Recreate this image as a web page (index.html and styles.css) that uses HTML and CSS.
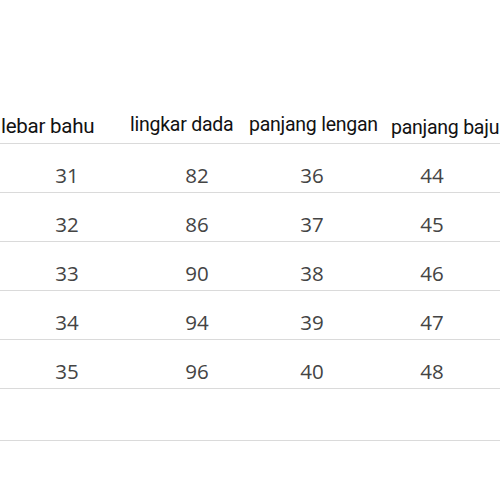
FILE: index.html
```html
<!DOCTYPE html>
<html>
<head>
<meta charset="utf-8">
<link rel="stylesheet" href="styles.css">
</head>
<body>
<div class="sheet">
  <div class="head">
    <span class="hd hd-1">lebar bahu</span>
    <span class="hd hd-2">lingkar dada</span>
    <span class="hd hd-3">panjang lengan</span>
    <span class="hd hd-4">panjang baju</span>
  </div>
  <div class="row"><span>31</span><span>82</span><span>36</span><span>44</span></div>
  <div class="row"><span>32</span><span>86</span><span>37</span><span>45</span></div>
  <div class="row"><span>33</span><span>90</span><span>38</span><span>46</span></div>
  <div class="row"><span>34</span><span>94</span><span>39</span><span>47</span></div>
  <div class="row"><span>35</span><span>96</span><span>40</span><span>48</span></div>
  <div class="row row-empty"></div>
</div>
</body>
</html>
```
FILE: styles.css
```css
html, body {
  margin: 0;
  padding: 0;
  background: #ffffff;
}
.sheet {
  width: 500px;
  height: 500px;
  overflow: hidden;
}
.head {
  height: 144px;
  box-sizing: border-box;
  border-bottom: 1px solid #dadada;
  display: grid;
  grid-template-columns: 130px 119px 142px 109px;
  align-items: end;
  font-family: Roboto, "Noto Sans", sans-serif;
  font-size: 19.5px;
  letter-spacing: -0.25px;
  color: #121212;
}
.hd {
  line-height: 24px;
  white-space: nowrap;
}
.hd-1 { padding-left: 1px; padding-bottom: 5px; font-size: 20.5px; }
.hd-2 { padding-bottom: 6px; }
.hd-3 { padding-bottom: 6px; }
.hd-4 { padding-bottom: 3px; }
.row {
  display: grid;
  grid-template-columns: 134px 126px 104px 136px;
  height: 49px;
  box-sizing: border-box;
  border-bottom: 1px solid #dadada;
  font-family: "Open Sans", "Noto Sans", sans-serif;
  font-size: 20.5px;
  line-height: 20px;
  color: #444444;
}
.row span {
  text-align: center;
  padding-top: 21px;
}
.row-empty {
  height: 52px;
}
```
